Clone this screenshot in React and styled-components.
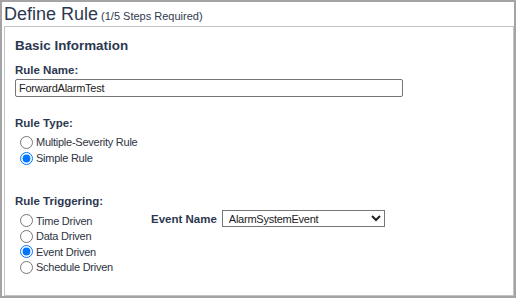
import React from "react";
import styled, { createGlobalStyle } from "styled-components";

const GlobalStyle = createGlobalStyle`
  html, body { margin: 0; padding: 0; background: #fff; }
  body { font-family: "Liberation Sans", Arial, sans-serif; }
`;

const Frame = styled.div`
  box-sizing: border-box;
  width: 516px;
  height: 298px;
  border: 2px solid #a4a4a4;
  display: flex;
  flex-direction: column;
  background: #fff;
`;

const Header = styled.header`
  height: 24px;
  padding-left: 2px;
  display: flex;
  align-items: baseline;
  color: #2c3850;
`;

const Title = styled.h1`
  margin: 0;
  font-size: 18px;
  font-weight: normal;
  line-height: 24px;
`;

const Subtitle = styled.span`
  margin-left: 3px;
  font-size: 11px;
  color: #2f3a4f;
`;

const Panel = styled.section`
  flex: 1;
  margin-left: 2px;
  border: 1px solid #c3c3c3;
  padding: 0 10px;
  display: flex;
  flex-direction: column;
  align-items: flex-start;
`;

const SectionTitle = styled.h2`
  margin: 11px 0 0;
  font-size: 13.4px;
  font-weight: bold;
  line-height: 16px;
  color: #2c3850;
`;

const FieldLabel = styled.div`
  margin-top: ${(p) => p.$top}px;
  font-size: 11.5px;
  font-weight: bold;
  line-height: 16px;
  color: #2c3850;
`;

const TextInput = styled.input`
  box-sizing: border-box;
  margin: 1px 0 0;
  width: 388px;
  height: 18px;
  padding: 0 3px;
  border: 1px solid #767676;
  border-radius: 2px;
  font-family: inherit;
  font-size: 11px;
  letter-spacing: -0.25px;
  color: #222;
  background: #fff;
  outline: none;
`;

const RadioGroup = styled.div`
  margin-top: ${(p) => p.$top || 0}px;
  display: flex;
  flex-direction: column;
`;

const RadioRow = styled.label`
  display: flex;
  align-items: center;
  height: ${(p) => p.$h}px;
  font-size: 11px;
  letter-spacing: -0.25px;
  color: #2e3442;
  white-space: nowrap;
`;

const Radio = styled.input.attrs({ type: "radio" })`
  width: 13px;
  height: 13px;
  margin: 0 3px 0 5px;
  flex: none;
`;

const TriggerGrid = styled.div`
  margin-top: 4px;
  display: grid;
  grid-template-columns: 136px auto;
  align-items: start;
`;

const EventField = styled.div`
  margin-top: -3px;
  display: flex;
  align-items: center;
  gap: 5px;
`;

const InlineLabel = styled.span`
  font-size: 11.5px;
  font-weight: bold;
  color: #2c3850;
`;

const Select = styled.select`
  box-sizing: border-box;
  width: 163px;
  height: 17px;
  margin: 0;
  padding: 0 0 0 2px;
  border: 1px solid #767676;
  border-radius: 0;
  font-family: inherit;
  font-size: 11px;
  letter-spacing: -0.25px;
  color: #222;
  background: #fff;
`;

const noop = () => {};

export default function App() {
  return (
    <>
      <GlobalStyle />
      <Frame>
        <Header>
          <Title>Define Rule</Title>
          <Subtitle>(1/5 Steps Required)</Subtitle>
        </Header>
        <Panel>
          <SectionTitle>Basic Information</SectionTitle>
          <FieldLabel $top={8}>Rule Name:</FieldLabel>
          <TextInput value="ForwardAlarmTest" onChange={noop} />
          <FieldLabel $top={18}>Rule Type:</FieldLabel>
          <RadioGroup $top={3}>
            <RadioRow $h={16}>
              <Radio name="type" checked={false} onChange={noop} />
              Multiple-Severity Rule
            </RadioRow>
            <RadioRow $h={16}>
              <Radio name="type" checked onChange={noop} />
              Simple Rule
            </RadioRow>
          </RadioGroup>
          <FieldLabel $top={27}>Rule Triggering:</FieldLabel>
          <TriggerGrid>
            <RadioGroup>
              <RadioRow $h={15.5}>
                <Radio name="trig" checked={false} onChange={noop} />
                Time Driven
              </RadioRow>
              <RadioRow $h={15.5}>
                <Radio name="trig" checked={false} onChange={noop} />
                Data Driven
              </RadioRow>
              <RadioRow $h={15.5}>
                <Radio name="trig" checked onChange={noop} />
                Event Driven
              </RadioRow>
              <RadioRow $h={15.5}>
                <Radio name="trig" checked={false} onChange={noop} />
                Schedule Driven
              </RadioRow>
            </RadioGroup>
            <EventField>
              <InlineLabel>Event Name</InlineLabel>
              <Select value="AlarmSystemEvent" onChange={noop}>
                <option value="AlarmSystemEvent">AlarmSystemEvent</option>
              </Select>
            </EventField>
          </TriggerGrid>
        </Panel>
      </Frame>
    </>
  );
}
